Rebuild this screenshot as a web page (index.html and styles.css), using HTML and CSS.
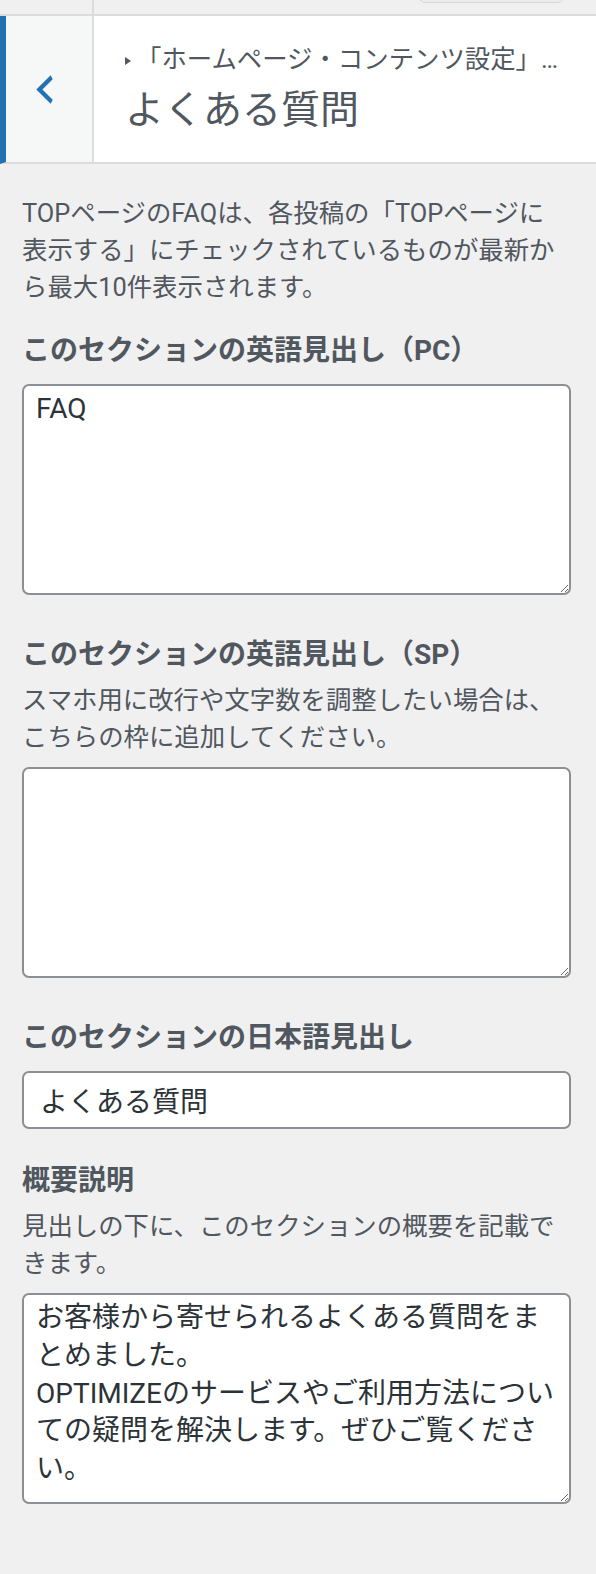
FILE: index.html
```html
<!DOCTYPE html>
<html lang="ja">
  <head>
    <meta charset="utf-8">
    <link rel="stylesheet" href="styles.css">
  </head>

  <body>
    <div class="topbar">
      <div class="topbar-side"></div>
      <div class="topbar-main"><span class="pill"></span></div>
    </div>

    <div class="section-head">
      <button class="back" type="button" aria-label="戻る">
        <svg width="41" height="41" viewBox="0 0 20 20">
          <path d="M14 5l-5 5 5 5-1 2-7-7 7-7z" fill="#2271b1"/>
        </svg>
      </button>
      <div class="titles">
        <span class="action">「ホームページ・コンテンツ設定」…</span>
        <h3>よくある質問</h3>
      </div>
    </div>

    <div class="content">
      <p class="section-desc">TOPページのFAQは、各投稿の「TOPページに<br>表示する」にチェックされているものが最新から最大10件表示されます。</p>

      <div class="control">
        <label class="control-title">このセクションの英語見出し（PC）</label>
        <textarea>FAQ</textarea>
      </div>

      <div class="control">
        <label class="control-title">このセクションの英語見出し（SP）</label>
        <p class="control-desc">スマホ用に改行や文字数を調整したい場合は、こちらの枠に追加してください。</p>
        <textarea></textarea>
      </div>

      <div class="control">
        <label class="control-title">このセクションの日本語見出し</label>
        <input type="text" value="よくある質問">
      </div>

      <div class="control">
        <label class="control-title">概要説明</label>
        <p class="control-desc">見出しの下に、このセクションの概要を記載できます。</p>
        <textarea>お客様から寄せられるよくある質問をまとめました。
OPTIMIZEのサービスやご利用方法についての疑問を解決します。ぜひご覧ください。</textarea>
      </div>
    </div>
  </body>
</html>
```

FILE: styles.css
```css
body {
  margin: 0;
  background-color: #f0f0f1;
  font-family: Roboto, "Noto Sans CJK JP", sans-serif;
  color: #50575e;
}

.topbar {
  display: flex;
  height: 14px;
  overflow: hidden;
  border-bottom: 2px solid #dcdcde;
}

.topbar-side {
  width: 92px;
  border-right: 2px solid #dcdcde;
}

.topbar-main {
  flex: 1;
}

.pill {
  display: block;
  width: 147px;
  height: 32px;
  margin: -30px 0 0 324px;
  border-radius: 8px;
  background-color: #ececec;
  border-bottom: 1px solid #d6d6d6;
}

.section-head {
  display: flex;
  height: 146px;
  background-color: #fff;
  border-left: 6px solid #2271b1;
  border-bottom: 2px solid #dcdcde;
}

.back {
  width: 88px;
  box-sizing: border-box;
  padding: 0 9px 0 0;
  border: none;
  border-right: 2px solid #dcdcde;
  background-color: #f6f7f7;
  display: flex;
  align-items: center;
  justify-content: center;
}

.titles {
  padding: 28px 0 0 31px;
}

.action {
  display: block;
  font-size: 25.4px;
  line-height: 30px;
  white-space: nowrap;
}

.action::before {
  content: "";
  display: inline-block;
  border-left: 6px solid #50575e;
  border-top: 4px solid transparent;
  border-bottom: 4px solid transparent;
  margin-right: 5px;
  vertical-align: 3px;
}

.titles h3 {
  margin: 13px 0 0;
  font-size: 39px;
  font-weight: 400;
  line-height: 46px;
}

.content {
  padding: 31px 25px 40px 22px;
}

.section-desc {
  margin: 0 0 25px;
  font-size: 25.4px;
  line-height: 37px;
}

.control {
  display: flow-root;
  margin-bottom: 32px;
}

.control-title {
  display: block;
  font-size: 28px;
  font-weight: 700;
  line-height: 40px;
  margin-bottom: 13px;
}

.control-desc {
  margin: -6px 0 11px;
  font-size: 25.4px;
  line-height: 37px;
}

textarea,
input {
  display: block;
  width: 100%;
  box-sizing: border-box;
  border: 2px solid #8c8f94;
  border-radius: 7px;
  background-color: #fff;
  color: #2c3338;
  font-family: Roboto, "Noto Sans CJK JP", sans-serif;
  font-size: 28px;
}

textarea {
  height: 211px;
  padding: 4px 12px;
  line-height: 37.75px;
  margin-bottom: 8px;
  resize: vertical;
}

input {
  height: 58px;
  padding: 0 16px;
}
```
